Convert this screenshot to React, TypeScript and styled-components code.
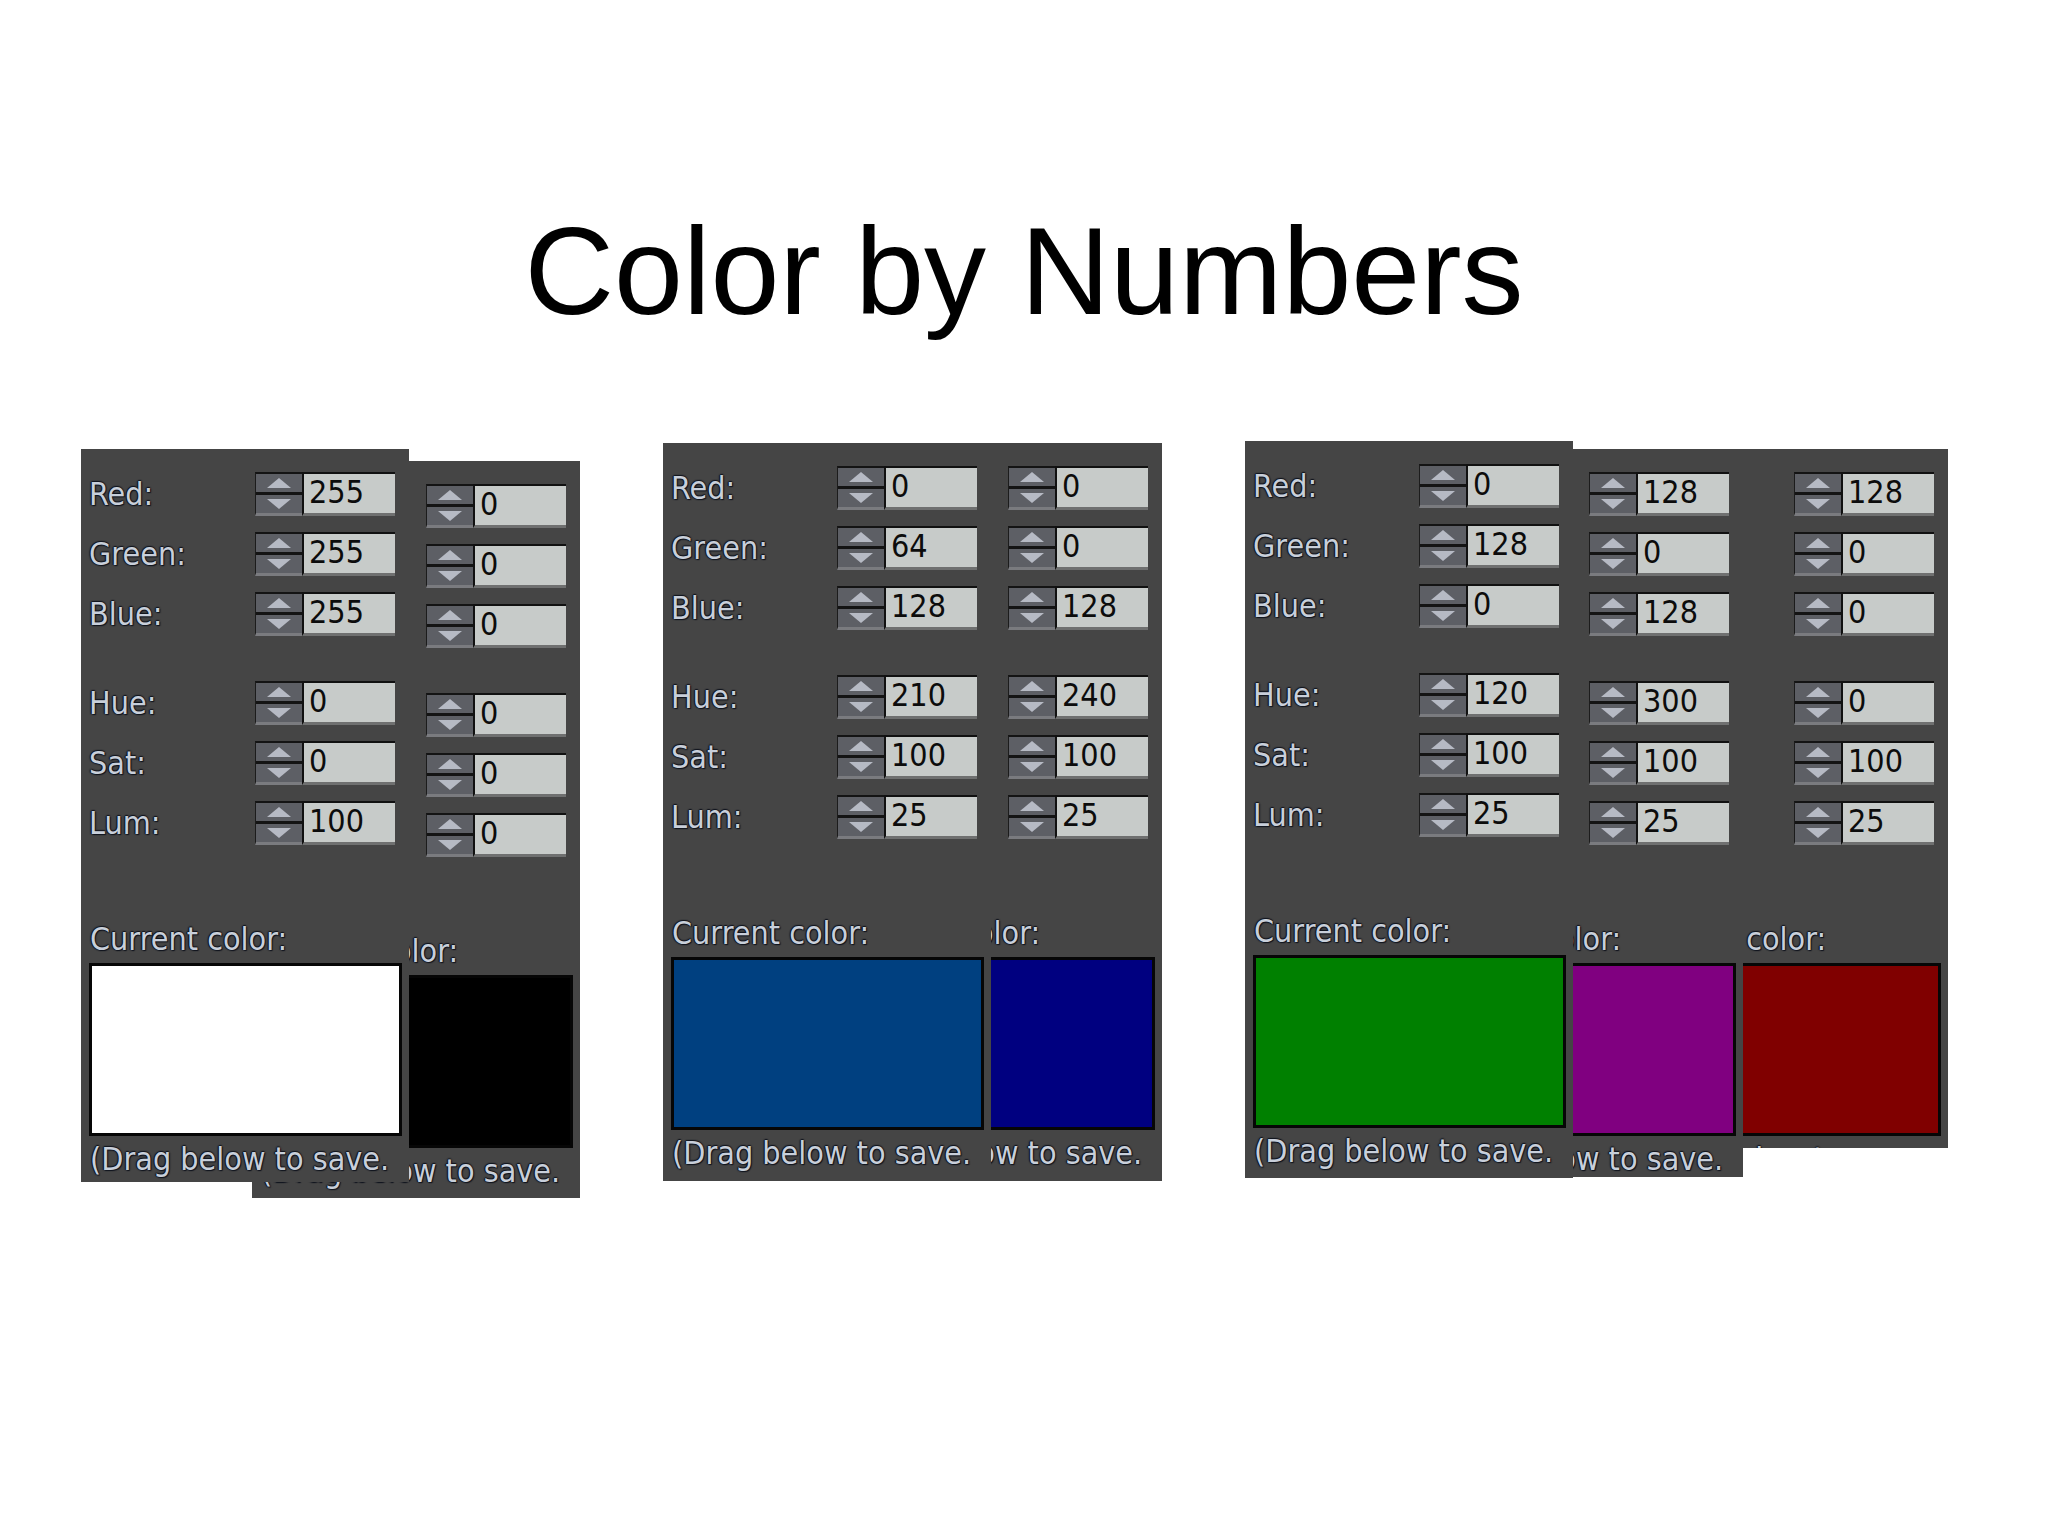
import styled, { createGlobalStyle } from 'styled-components'

const GlobalStyle = createGlobalStyle`
  html, body {
    margin: 0;
    padding: 0;
    background: #fff;
  }
`

const Page = styled.div`
  width: 2048px;
  height: 1536px;
  background: #fff;
  overflow: hidden;
`

const Title = styled.h1`
  margin: 209px 0 0;
  font-family: "Liberation Sans", Arial, sans-serif;
  font-weight: normal;
  font-size: 124px;
  line-height: 124px;
  color: #000;
  text-align: center;
`

const Row = styled.div`
  display: flex;
  align-items: flex-start;
  gap: 83px;
  margin-top: 108px;
  padding-left: 81px;
`

// overlapping picker windows share one grid cell, later ones sit on top
const Stack = styled.div<{ $top: number }>`
  display: grid;
  margin-top: ${p => p.$top}px;
  > * {
    grid-area: 1 / 1;
  }
`

const Panel = styled.div<{ $x: number; $y: number; $h: number }>`
  width: 328px;
  height: ${p => p.$h}px;
  margin-left: ${p => p.$x}px;
  margin-top: ${p => p.$y}px;
  box-sizing: border-box;
  padding: 23px 14px 0 5px;
  background: #454545;
  overflow: hidden;
  font-family: "DejaVu Sans Condensed", "DejaVu Sans", sans-serif;
  font-stretch: condensed;
`

const Fields = styled.div<{ $gap: number }>`
  display: grid;
  grid-template-columns: 169px 47px 93px;
  row-gap: 16px;
  margin-top: ${p => p.$gap}px;
`

const shadow = `
  color: #c8cfda;
  text-shadow: 0 0 2px #10141e, 1px 1px 1px #10141e, -1px 0 1px #10141e, 0 -1px 1px #10141e;
`

const Label = styled.span`
  padding-left: 3px;
  font-size: 32px;
  line-height: 44px;
  white-space: nowrap;
  ${shadow}
`

const Spinner = styled.div`
  display: flex;
  flex-direction: column;
  gap: 3px;
  height: 44px;
  box-sizing: border-box;
  background: #141414;
  border-top: 2px solid #141414;
  border-left: 1px solid #1c1c1c;
  border-bottom: 3px solid #7a7b7f;
`

const SpinButton = styled.div`
  flex: 1;
  display: flex;
  align-items: center;
  justify-content: center;
  background: #5d5f65;
  svg {
    filter: blur(0.5px);
  }
`

const Value = styled.div`
  height: 44px;
  box-sizing: border-box;
  padding-left: 5px;
  background: #c7cbc9;
  border-top: 2px solid #111;
  border-left: 2px solid #111;
  border-bottom: 3px solid #6f7070;
  font-size: 32px;
  line-height: 36px;
  color: #0c0c0c;
`

const Caption = styled.div<{ $top: number }>`
  margin-top: ${p => p.$top}px;
  padding-left: 4px;
  font-size: 32px;
  line-height: 36px;
  white-space: nowrap;
  ${shadow}
`

const Swatch = styled.div<{ $color: string }>`
  width: 313px;
  height: 173px;
  margin: 6px 0 0 3px;
  box-sizing: border-box;
  border: 3px solid #060606;
  background: ${p => p.$color};
`

const Arrow = ({ down }: { down?: boolean }) => (
  <svg width="26" height="12" viewBox="0 0 26 12">
    <polygon points={down ? '1,1 25,1 13,11' : '13,1 25,11 1,11'} fill="#b6bac4" />
  </svg>
)

interface IField {
  label: string
  value: number
}

const FieldRows = ({ rows, gap }: { rows: IField[]; gap: number }) => (
  <Fields $gap={gap}>
    {rows.map(r => (
      <>
        <Label>{r.label}</Label>
        <Spinner>
          <SpinButton><Arrow /></SpinButton>
          <SpinButton><Arrow down /></SpinButton>
        </Spinner>
        <Value>{r.value}</Value>
      </>
    ))}
  </Fields>
)

interface IPicker {
  x: number
  y: number
  h: number
  rgb: number[]
  hsl: number[]
  swatch: string
}

const Picker = ({ x, y, h, rgb, hsl, swatch }: IPicker) => (
  <Panel $x={x} $y={y} $h={h}>
    <FieldRows gap={0} rows={['Red:', 'Green:', 'Blue:'].map((label, i) => ({ label, value: rgb[i] }))} />
    <FieldRows gap={45} rows={['Hue:', 'Sat:', 'Lum:'].map((label, i) => ({ label, value: hsl[i] }))} />
    <Caption $top={76}>Current color:</Caption>
    <Swatch $color={swatch} />
    <Caption $top={5}>(Drag below to save.</Caption>
  </Panel>
)

const groups: { top: number; pickers: IPicker[] }[] = [
  {
    top: 8,
    pickers: [
      { x: 171, y: 12, h: 737, rgb: [0, 0, 0], hsl: [0, 0, 0], swatch: '#000000' },
      { x: 0, y: 0, h: 733, rgb: [255, 255, 255], hsl: [0, 0, 100], swatch: '#ffffff' },
    ],
  },
  {
    top: 2,
    pickers: [
      { x: 171, y: 0, h: 738, rgb: [0, 0, 128], hsl: [240, 100, 25], swatch: '#000080' },
      { x: 0, y: 0, h: 738, rgb: [0, 64, 128], hsl: [210, 100, 25], swatch: '#004080' },
    ],
  },
  {
    top: 0,
    pickers: [
      { x: 375, y: 8, h: 699, rgb: [128, 0, 0], hsl: [0, 100, 25], swatch: '#800000' },
      { x: 170, y: 8, h: 728, rgb: [128, 0, 128], hsl: [300, 100, 25], swatch: '#800080' },
      { x: 0, y: 0, h: 737, rgb: [0, 128, 0], hsl: [120, 100, 25], swatch: '#008000' },
    ],
  },
]

const App = () => {
  return (
    <Page>
      <GlobalStyle />
      <Title>Color by Numbers</Title>
      <Row>
        {groups.map((g, gi) => (
          <Stack key={gi} $top={g.top}>
            {g.pickers.map((p, pi) => (
              <Picker key={pi} {...p} />
            ))}
          </Stack>
        ))}
      </Row>
    </Page>
  )
}

export default App
